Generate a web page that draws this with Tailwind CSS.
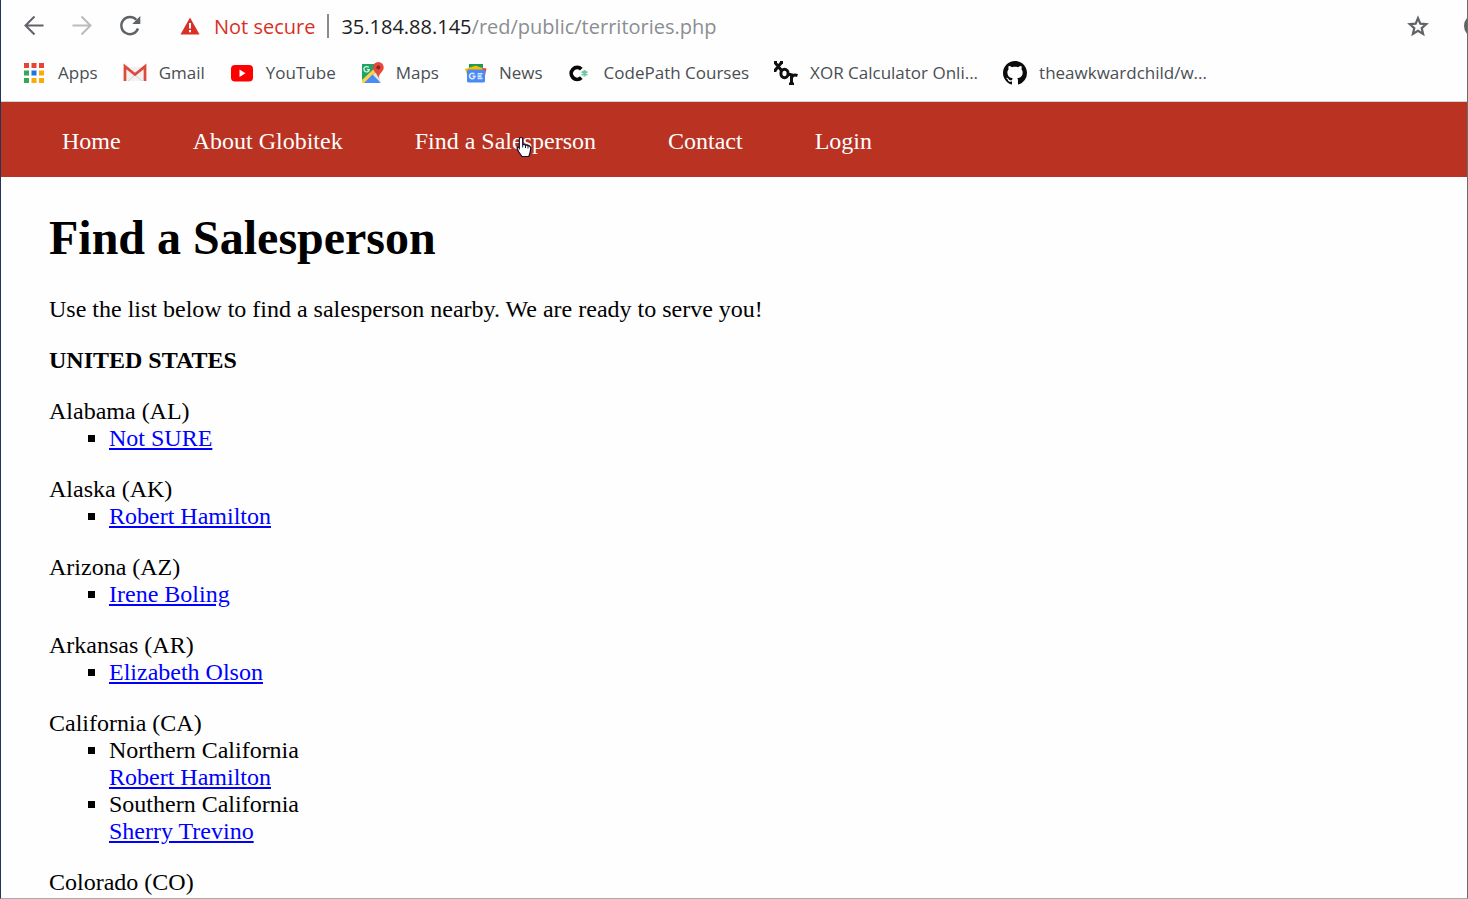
<!DOCTYPE html>
<html lang="en">
<head>
<meta charset="utf-8">
<meta name="viewport" content="width=device-width, initial-scale=1">
<title>Find a Salesperson</title>
<script src="https://cdn.jsdelivr.net/npm/@tailwindcss/browser@4"></script>
</head>
<body class="bg-white">
<div class="flex h-screen flex-col overflow-hidden border-x border-b border-l-[#26335a] border-r-[#6b6b6b] border-b-[#a9a9a9] bg-[#fefefe]">

  <!-- Browser toolbar -->
  <header class="shrink-0 border-b border-[#d5d5d5] font-['Open_Sans',sans-serif]">
    <div class="flex h-[52px] items-center justify-between overflow-hidden whitespace-nowrap pl-[21px]">
      <div class="flex items-center">
        <div class="flex items-center gap-6 text-[#5f6368]">
          <button type="button" aria-label="Back" class="block size-6">
            <svg viewBox="0 0 24 24" class="size-6" fill="none" stroke="currentColor" stroke-width="2"><path d="M21.500 11.500H3.500M12.500 2.500l-9 9 9 9"/></svg>
          </button>
          <button type="button" aria-label="Forward" class="block size-6 text-[#b9bbbd]">
            <svg viewBox="0 0 24 24" class="size-6" fill="none" stroke="currentColor" stroke-width="2"><path d="M2.500 11.500h18M11.500 2.500l9 9-9 9"/></svg>
          </button>
          <button type="button" aria-label="Reload" class="block size-6">
            <svg viewBox="0 0 24 24" class="size-6" fill="none" stroke="currentColor" stroke-width="2.400"><path d="M20 14.500A8.600 8.600 0 1 1 18.300 5.800"/><path d="M22.300 2v8h-8z" fill="currentColor" stroke="none"/></svg>
          </button>
        </div>
        <button type="button" class="ml-[38px] flex items-center gap-[14px] pt-0.5 text-xl text-[#d93025]">
          <svg viewBox="0 0 20 20" class="size-5" aria-hidden="true"><path d="M10 .5L19.500 17.500H.5z" fill="#d93025"/><path d="M10 6v5.500M10 13v2.200" stroke="#fff" stroke-width="2"/></svg>
          Not secure
        </button>
        <span class="ml-3 h-6 w-0.5 bg-[#8a8a8a]"></span>
        <a href="#" class="ml-3 pt-0.5 text-xl text-[#8b8e91]"><span class="text-[#202124]">35.184.88.145</span>/red/public/territories.php</a>
      </div>
      <div class="flex items-center gap-[34px]">
        <button type="button" aria-label="Bookmark this page" class="block size-6 text-[#5f6368]">
          <svg viewBox="0 0 24 24" class="size-6" fill="none" stroke="currentColor" stroke-width="2.200"><path d="M12 4.200l2.300 5.500 5.900.5-4.500 3.900 1.400 5.800-5.100-3.100-5.100 3.100 1.400-5.800-4.500-3.900 5.900-.5z"/></svg>
        </button>
        <button type="button" aria-label="Profile" class="h-6 w-[3px] overflow-hidden"><span class="block size-6 rounded-full bg-[#5f6368]"></span></button>
      </div>
    </div>

    <nav aria-label="Bookmarks" class="flex h-[49px] items-start gap-[25px] overflow-hidden whitespace-nowrap pl-[21px] pt-2 text-[17px] text-[#4a4e53]">
      <a href="#" class="flex h-[26px] items-center gap-3">
        <svg viewBox="0 0 24 24" class="size-6" aria-hidden="true"><g fill="#ea4335"><path d="M2 2h5v5H2zM9.500 2h5v5h-5zM17 2h5v5h-5z"/></g><path d="M2 9.500h5v5H2zM2 17h5v5H2z" fill="#34a853"/><path d="M9.500 9.500h5v5h-5z" fill="#1a73e8"/><path d="M17 9.500h5v5h-5zM9.500 17h5v5h-5zM17 17h5v5h-5z" fill="#fbab05"/></svg>
        Apps
      </a>
      <a href="#" class="flex h-[26px] items-center gap-3">
        <svg viewBox="0 0 24 24" class="size-6" aria-hidden="true"><path d="M4 6h16v14H4z" fill="#f1f1f1"/><path d="M5 20l7-6 7 6" fill="none" stroke="#d4d4d4"/><path d="M2 20V5.500L12 13.500l10-8V20" fill="none" stroke="#dd4b3e" stroke-width="2.800"/></svg>
        Gmail
      </a>
      <a href="#" class="flex h-[26px] items-center gap-3">
        <svg viewBox="0 0 24 24" class="size-6" aria-hidden="true"><rect x="1" y="4" width="22" height="16.500" rx="4" fill="#f00"/><path d="M9.500 8.500v7.400l6-3.700z" fill="#fff"/></svg>
        YouTube
      </a>
      <a href="#" class="flex h-[26px] items-center gap-[11px]">
        <svg viewBox="0 0 24 24" class="size-6" aria-hidden="true"><path d="M1 3h17v19H1z" fill="#1fa463"/><path d="M1 19L17 4v5L4 22H1z" fill="#ffd04b"/><path d="M3 22l8.500-8.500L20 22z" fill="#4a8af4"/><path d="M12 14l5-5 3 13z" fill="#e4e6e8"/><path d="M7.700 6.500a2.700 2.700 0 1 0 .6 2.200H5.900" fill="none" stroke="#d7f0e2" stroke-width="1.300"/><path d="M17.300 1a5.400 5.400 0 0 0-5.400 5.400c0 4.200 4.500 5.300 5.400 10.800.9-5.500 5.400-6.600 5.400-10.800A5.400 5.400 0 0 0 17.300 1z" fill="#e2483b"/><circle cx="17.300" cy="6.400" r="1.900" fill="#8a2018"/></svg>
        Maps
      </a>
      <a href="#" class="flex h-[26px] items-center gap-[11px]">
        <svg viewBox="0 0 24 24" class="size-6" aria-hidden="true"><path d="M5 3h14v8H5z" fill="#1a9c55"/><path d="M12 6l10.500 1.500L20.500 17 12 12z" fill="#ea4335"/><path d="M1 8l11-3.500 5 4.500-13 7z" fill="#fbbc04"/><path d="M12.500 5l6 2v3h-6z" fill="#fbbc04"/><rect x="3" y="8.500" width="18" height="13" rx="1.500" fill="#4a8af4"/><path d="M10.300 13.300a2.700 2.700 0 1 0 .6 2H8.500M13.500 12.800h5M13.500 15.100h4M13.500 17.400h5" fill="none" stroke="#d9e6fd" stroke-width="1.600"/></svg>
        News
      </a>
      <a href="#" class="flex h-[26px] items-center gap-3">
        <svg viewBox="0 0 24 24" class="size-6" aria-hidden="true"><path d="M13.300 8.200a5.900 5.900 0 1 0 0 8.400" fill="none" stroke="#080808" stroke-width="3.800"/><path d="M16.500 9v6.600M13.700 10.600l5.600 3.400M13.700 14l5.600-3.400" stroke="#6fc7a0" stroke-width="1.900"/></svg>
        CodePath Courses
      </a>
      <a href="#" class="flex h-[26px] items-center gap-3">
        <svg viewBox="0 0 24 24" class="size-6" fill="none" stroke="#111" stroke-width="3" aria-hidden="true"><path d="M1 1.500l6.500 8M7.500 1.500l-6.500 8M-1 1.500h4M6 1.500h3M-1 9.500h3.500"/><ellipse cx="10.500" cy="12.500" rx="3.600" ry="4.300"/><path d="M17.500 12.500V24M14.500 13.500h3M15 23h5M17.500 17c1-3 3-3.500 6-2.500"/></svg>
        XOR Calculator Onli...
      </a>
      <a href="#" class="flex h-[26px] items-center gap-3">
        <svg viewBox="0 0 16 16" class="size-6" aria-hidden="true"><path fill="#0b0b0b" d="M8 0C3.580 0 0 3.580 0 8c0 3.540 2.290 6.530 5.470 7.590.4.070.55-.17.55-.38 0-.19-.01-.82-.01-1.490-2.010.37-2.530-.49-2.690-.94-.09-.23-.48-.94-.82-1.130-.28-.15-.68-.52-.01-.53.63-.01 1.080.58 1.230.82.72 1.210 1.870.87 2.330.66.07-.52.28-.87.51-1.070-1.780-.2-3.640-.89-3.640-3.950 0-.87.31-1.590.82-2.150-.08-.2-.36-1.020.08-2.120 0 0 .67-.21 2.200.82.64-.18 1.320-.27 2-.27s1.360.09 2 .27c1.530-1.040 2.200-.82 2.200-.82.44 1.100.16 1.920.08 2.120.51.56.82 1.270.82 2.150 0 3.070-1.870 3.750-3.650 3.950.29.25.54.73.54 1.480 0 1.070-.01 1.930-.01 2.200 0 .21.15.46.55.38A8.010 8.010 0 0 0 16 8c0-4.420-3.580-8-8-8z"/></svg>
        theawkwardchild/w...
      </a>
    </nav>
  </header>

  <!-- Site -->
  <div class="min-h-0 flex-1 overflow-hidden font-['Liberation_Serif',serif] text-2xl leading-[27px] text-black">
    <nav aria-label="Main" class="flex h-[75px] items-center gap-[72px] bg-[#b93222] px-[61px] pt-1 whitespace-nowrap text-[#fefefe]">
      <a href="#">Home</a>
      <a href="#">About Globitek</a>
      <a href="#" class="relative">Find a Salesperson
        <svg viewBox="0 0 16 22" class="absolute top-2 left-[101px] h-[22px] w-4" aria-hidden="true"><path d="M5 1.500c1.200 0 1.700.8 1.700 1.800v5l5.800 1.300c1.600.4 2.300 1.300 2.200 2.800l-.7 4.600-1.200 3.500H6L2.500 15.500 1 11.800c.5-1 1.500-.8 2.300.3V3.300c0-1 .5-1.800 1.700-1.800z" fill="#fff" stroke="#0d1430" stroke-width="1.200"/><path d="M6.700 8v3.500M9.500 9v3M12 9.600v2.800" stroke="#0d1430"/></svg>
      </a>
      <a href="#">Contact</a>
      <a href="#">Login</a>
    </nav>

    <main class="px-12">
      <h1 class="pt-[33px] text-5xl leading-[55px] font-bold">Find a Salesperson</h1>
      <p class="mt-[31px]">Use the list below to find a salesperson nearby. We are ready to serve you!</p>
      <h2 class="mt-6 font-bold">UNITED STATES</h2>

      <section class="mt-6">
        <h3>Alabama (AL)</h3>
        <ul class="list-[square] pl-[60px]">
          <li><a href="#" class="text-[#0000ff] underline">Not SURE</a></li>
        </ul>
      </section>
      <section class="mt-6">
        <h3>Alaska (AK)</h3>
        <ul class="list-[square] pl-[60px]">
          <li><a href="#" class="text-[#0000ff] underline">Robert Hamilton</a></li>
        </ul>
      </section>
      <section class="mt-6">
        <h3>Arizona (AZ)</h3>
        <ul class="list-[square] pl-[60px]">
          <li><a href="#" class="text-[#0000ff] underline">Irene Boling</a></li>
        </ul>
      </section>
      <section class="mt-6">
        <h3>Arkansas (AR)</h3>
        <ul class="list-[square] pl-[60px]">
          <li><a href="#" class="text-[#0000ff] underline">Elizabeth Olson</a></li>
        </ul>
      </section>
      <section class="mt-6">
        <h3>California (CA)</h3>
        <ul class="list-[square] pl-[60px]">
          <li>Northern California<br><a href="#" class="text-[#0000ff] underline">Robert Hamilton</a></li>
          <li>Southern California<br><a href="#" class="text-[#0000ff] underline">Sherry Trevino</a></li>
        </ul>
      </section>
      <section class="mt-6">
        <h3>Colorado (CO)</h3>
      </section>
    </main>
  </div>
</div>
</body>
</html>
